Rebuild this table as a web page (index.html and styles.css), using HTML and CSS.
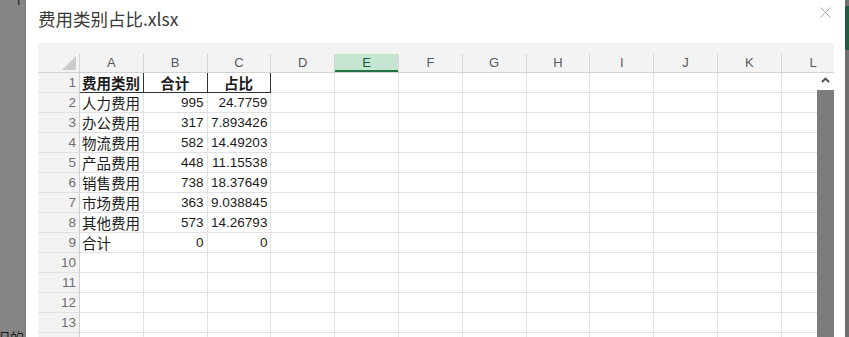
FILE: index.html
```html
<!DOCTYPE html>
<html>
<head>
<meta charset="utf-8">
<link rel="stylesheet" href="styles.css">
</head>
<body>
<div class="screen">
  <div class="backdrop-left">
    <span class="peek peek-top">下方</span>
    <span class="peek peek-bottom">旧的</span>
  </div>
  <div class="modal">
    <div class="modal-head">
      <div class="title">费用类别占比.xlsx</div>
      <svg class="close" width="11" height="11" viewBox="0 0 11 11"><path d="M0.5 0.5 L10.5 10.5 M10.5 0.5 L0.5 10.5" stroke="#a8a8a8" stroke-width="1" fill="none"/></svg>
    </div>
    <div class="sheet">
      <div class="top-band"></div>
      <div class="col-head">
        <div class="corner"><svg width="14" height="14" viewBox="0 0 14 14"><path d="M14 0 L14 14 L0 14 Z" fill="#cbcbcb"/></svg></div>
        <div class="ch">A</div><div class="ch">B</div><div class="ch">C</div><div class="ch">D</div>
        <div class="ch sel">E</div><div class="ch">F</div><div class="ch">G</div><div class="ch">H</div>
        <div class="ch">I</div><div class="ch">J</div><div class="ch">K</div><div class="ch">L</div>
      </div>
      <div class="body">
        <div class="grid">
          <div class="rh">1</div><div class="c zh b hd">费用类别</div><div class="c zh b hd ctr">合计</div><div class="c zh b hd ctr">占比</div><div class="c"></div><div class="c"></div><div class="c"></div><div class="c"></div><div class="c"></div><div class="c"></div><div class="c"></div><div class="c"></div><div class="c"></div>
          <div class="rh">2</div><div class="c zh">人力费用</div><div class="c n">995</div><div class="c n">24.7759</div><div class="c"></div><div class="c"></div><div class="c"></div><div class="c"></div><div class="c"></div><div class="c"></div><div class="c"></div><div class="c"></div><div class="c"></div>
          <div class="rh">3</div><div class="c zh">办公费用</div><div class="c n">317</div><div class="c n">7.893426</div><div class="c"></div><div class="c"></div><div class="c"></div><div class="c"></div><div class="c"></div><div class="c"></div><div class="c"></div><div class="c"></div><div class="c"></div>
          <div class="rh">4</div><div class="c zh">物流费用</div><div class="c n">582</div><div class="c n">14.49203</div><div class="c"></div><div class="c"></div><div class="c"></div><div class="c"></div><div class="c"></div><div class="c"></div><div class="c"></div><div class="c"></div><div class="c"></div>
          <div class="rh">5</div><div class="c zh">产品费用</div><div class="c n">448</div><div class="c n">11.15538</div><div class="c"></div><div class="c"></div><div class="c"></div><div class="c"></div><div class="c"></div><div class="c"></div><div class="c"></div><div class="c"></div><div class="c"></div>
          <div class="rh">6</div><div class="c zh">销售费用</div><div class="c n">738</div><div class="c n">18.37649</div><div class="c"></div><div class="c"></div><div class="c"></div><div class="c"></div><div class="c"></div><div class="c"></div><div class="c"></div><div class="c"></div><div class="c"></div>
          <div class="rh">7</div><div class="c zh">市场费用</div><div class="c n">363</div><div class="c n">9.038845</div><div class="c"></div><div class="c"></div><div class="c"></div><div class="c"></div><div class="c"></div><div class="c"></div><div class="c"></div><div class="c"></div><div class="c"></div>
          <div class="rh">8</div><div class="c zh">其他费用</div><div class="c n">573</div><div class="c n">14.26793</div><div class="c"></div><div class="c"></div><div class="c"></div><div class="c"></div><div class="c"></div><div class="c"></div><div class="c"></div><div class="c"></div><div class="c"></div>
          <div class="rh">9</div><div class="c zh">合计</div><div class="c n">0</div><div class="c n">0</div><div class="c"></div><div class="c"></div><div class="c"></div><div class="c"></div><div class="c"></div><div class="c"></div><div class="c"></div><div class="c"></div><div class="c"></div>
          <div class="rh">10</div><div class="c"></div><div class="c"></div><div class="c"></div><div class="c"></div><div class="c"></div><div class="c"></div><div class="c"></div><div class="c"></div><div class="c"></div><div class="c"></div><div class="c"></div><div class="c"></div>
          <div class="rh">11</div><div class="c"></div><div class="c"></div><div class="c"></div><div class="c"></div><div class="c"></div><div class="c"></div><div class="c"></div><div class="c"></div><div class="c"></div><div class="c"></div><div class="c"></div><div class="c"></div>
          <div class="rh">12</div><div class="c"></div><div class="c"></div><div class="c"></div><div class="c"></div><div class="c"></div><div class="c"></div><div class="c"></div><div class="c"></div><div class="c"></div><div class="c"></div><div class="c"></div><div class="c"></div>
          <div class="rh">13</div><div class="c"></div><div class="c"></div><div class="c"></div><div class="c"></div><div class="c"></div><div class="c"></div><div class="c"></div><div class="c"></div><div class="c"></div><div class="c"></div><div class="c"></div><div class="c"></div>
          <div class="rh"></div><div class="c"></div><div class="c"></div><div class="c"></div><div class="c"></div><div class="c"></div><div class="c"></div><div class="c"></div><div class="c"></div><div class="c"></div><div class="c"></div><div class="c"></div><div class="c"></div>
        </div>
        <div class="vscroll">
          <svg class="arrow" width="9" height="6" viewBox="0 0 9 6"><path d="M1 5 L4.5 1.5 L8 5" stroke="#4a4a4a" stroke-width="1.8" fill="none"/></svg>
          <div class="thumb"></div>
        </div>
      </div>
    </div>
  </div>
  <div class="backdrop-right"><div class="green"></div></div>
</div>
</body>
</html>
```

FILE: styles.css
```css
html, body {
  margin: 0;
  padding: 0;
}
body {
  width: 849px;
  height: 337px;
  overflow: hidden;
  background: #838383;
  font-family: "Liberation Sans", "Noto Sans CJK SC", sans-serif;
}
.screen {
  display: flex;
  width: 849px;
  height: 337px;
}
.backdrop-left {
  width: 26px;
  flex: none;
  background: #858585;
  position: relative;
  overflow: hidden;
  border-right: 1px solid #7a7a7a;
  box-sizing: border-box;
}
.peek {
  position: absolute;
  font-family: "Noto Sans CJK SC", sans-serif;
  font-size: 14px;
  color: #1e1e1e;
  white-space: nowrap;
}
.peek-top {
  top: -13px;
  left: 12px;
}
.peek-bottom {
  top: 327px;
  left: -4px;
}
.modal {
  width: 819px;
  flex: none;
  background: #ffffff;
  padding: 0 11px 0 12px;
  box-sizing: border-box;
  display: flex;
  flex-direction: column;
}
.modal-head {
  height: 43px;
  display: flex;
  justify-content: space-between;
  align-items: flex-start;
}
.title {
  font-family: "Noto Sans CJK SC", sans-serif;
  font-size: 17.5px;
  line-height: 22px;
  color: #3a3a3a;
  padding-top: 8px;
}
.close {
  margin-top: 7px;
  margin-right: 3px;
}
.sheet {
  width: 796px;
  flex: 1;
  display: flex;
  flex-direction: column;
  overflow: hidden;
}
.top-band {
  height: 11px;
  background: #f3f3f3;
}
.col-head {
  height: 18px;
  display: grid;
  grid-template-columns: 42px repeat(12, 63.8px);
  background: #f3f3f3;
  border-bottom: 1px solid #d2d2d2;
  box-sizing: content-box;
  overflow: hidden;
}
.corner {
  display: flex;
  justify-content: flex-end;
  align-items: flex-end;
  padding: 0 3px 2px 0;
  border-right: 1px solid #d6d6d6;
  box-sizing: border-box;
}
.ch {
  font-size: 13px;
  color: #595959;
  text-align: center;
  line-height: 18px;
  border-right: 1px solid #d6d6d6;
  box-sizing: border-box;
}
.ch.sel {
  background: #c7e6d2;
  color: #1f5a3a;
  box-shadow: inset 0 -2px 0 #217346;
}
.body {
  flex: 1;
  display: flex;
  overflow: hidden;
}
.grid {
  width: 779px;
  flex: none;
  display: grid;
  grid-template-columns: 42px repeat(12, 63.8px);
  grid-auto-rows: 20px;
  overflow: hidden;
  align-content: start;
}
.rh {
  background: #f3f3f3;
  color: #6e6e6e;
  font-size: 13.5px;
  line-height: 19px;
  text-align: right;
  padding-right: 3px;
  border-right: 1px solid #d0d0d0;
  border-bottom: 1px solid #e2e2e2;
  box-sizing: border-box;
}
.c {
  border-right: 1px solid #e2e2e2;
  border-bottom: 1px solid #e2e2e2;
  box-sizing: border-box;
  font-size: 13.5px;
  line-height: 19px;
  color: #1c1c1c;
  padding: 0 3px;
  white-space: nowrap;
  overflow: hidden;
}
.c.zh {
  font-family: "Noto Sans CJK SC", sans-serif;
  font-size: 14.5px;
  line-height: 19px;
  padding-left: 2px;
}
.c.b {
  font-weight: bold;
}
.c.hd {
  border-right: 1px solid #333333;
  border-bottom: 1px solid #333333;
}
.c.ctr {
  text-align: center;
}
.c.n {
  text-align: right;
}
.vscroll {
  width: 17px;
  flex: none;
  display: flex;
  flex-direction: column;
  align-items: center;
}
.arrow {
  margin-top: 4px;
}
.thumb {
  margin-top: 7px;
  width: 17px;
  flex: 1;
  background: #7c7c7c;
}
.backdrop-right {
  width: 4px;
  flex: none;
  background: #707070;
  padding-top: 6px;
  box-sizing: border-box;
}
.green {
  height: 44px;
  background: #1f5c3f;
}
```
